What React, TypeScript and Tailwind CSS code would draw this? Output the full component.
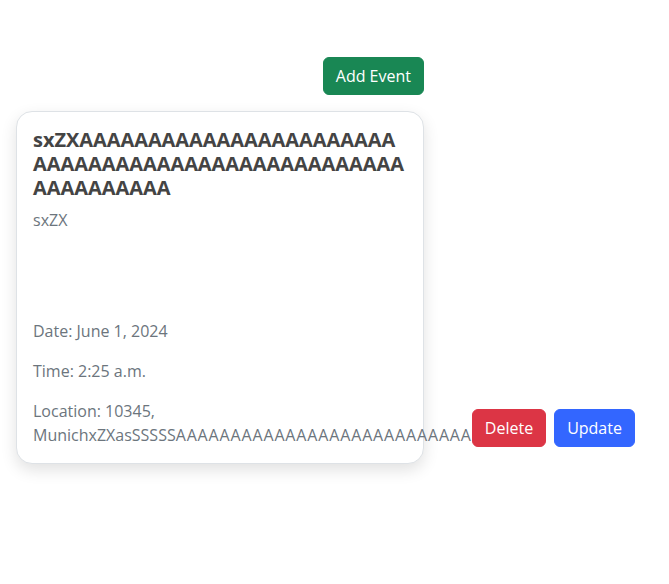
import React from 'react';

const title = 'sxZX' + 'A'.repeat(60);

const EventCard: React.FC = () => {
  return (
    <div className="w-[408px] rounded-2xl border border-[#dee2e6] bg-white p-4 shadow-[0_6px_16px_rgba(0,0,0,0.12)]">
      <h5 className="mb-2 break-all text-[20px] font-bold leading-[1.2] tracking-[-0.06px] text-[#444]">{title}</h5>
      <p className="mb-4 leading-6 text-[#6c757d]">sxZX</p>
      <div className="h-[71px]" />
      <p className="mb-4 leading-6 text-[#6c757d]">Date: June 1, 2024</p>
      <p className="mb-4 leading-6 text-[#6c757d]">Time: 2:25 a.m.</p>
      <div className="flex items-end">
        <p className="w-min shrink-0 leading-6 text-[#6c757d]">
          Location: 10345, MunichxZXasSSSSS<span className="tracking-[0.85px]">AAAAAAAAAAAAAAAAAAAAAAAAAAA</span>
        </p>
        <div className="flex shrink-0 gap-2">
          <button className="rounded-md border border-[#dc3545] bg-[#dc3545] px-3 py-1.5 leading-6 text-white">Delete</button>
          <button className="rounded-md border border-[#3366ff] bg-[#3366ff] px-3 py-1.5 leading-6 text-white">Update</button>
        </div>
      </div>
    </div>
  );
};

export default function App() {
  return (
    <div className="min-h-[584px] bg-white pl-4 pt-[57px] text-[16px] font-['Open_Sans',sans-serif]">
      <div className="flex w-[408px] flex-col">
        <button className="self-end rounded-md border border-[#198754] bg-[#198754] px-3 py-1.5 leading-6 text-white">Add Event</button>
        <div className="mt-4">
          <EventCard />
        </div>
      </div>
    </div>
  );
}
